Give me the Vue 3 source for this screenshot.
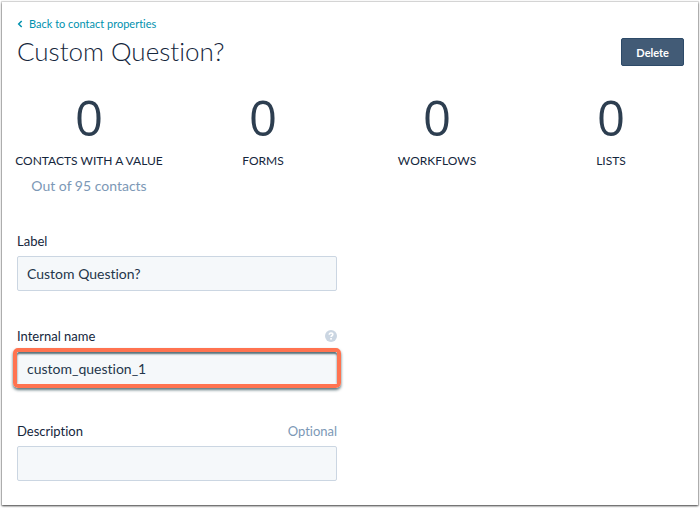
<script setup>
import { ref } from 'vue'

const label = ref('Custom Question?')
const internalName = ref('custom_question_1')
const description = ref('')

const stats = [
  { name: 'Contacts with a value', value: 0, note: 'Out of 95 contacts' },
  { name: 'Forms', value: 0 },
  { name: 'Workflows', value: 0 },
  { name: 'Lists', value: 0 },
]
</script>

<template>
  <div class="page">
    <main class="panel">
      <header class="header">
        <div>
          <a class="back" href="#properties">
            <svg class="chevron" viewBox="0 0 6 8" aria-hidden="true">
              <path d="M4.7 1 L1.7 4 L4.7 7" />
            </svg>
            Back to contact properties
          </a>
          <h1 class="title">Custom Question?</h1>
        </div>
        <button class="delete" type="button">Delete</button>
      </header>

      <section class="stats">
        <div v-for="stat in stats" :key="stat.name" class="stat">
          <div class="value">{{ stat.value }}</div>
          <div class="name">{{ stat.name }}</div>
          <div v-if="stat.note" class="note">{{ stat.note }}</div>
        </div>
      </section>

      <form class="form" @submit.prevent>
        <div class="field">
          <div class="caption">
            <label for="label">Label</label>
          </div>
          <input id="label" v-model="label" class="input" type="text" />
        </div>
        <div class="field">
          <div class="caption">
            <label for="internal-name">Internal name</label>
            <svg class="help" viewBox="0 0 12 12" aria-hidden="true">
              <circle cx="6" cy="6" r="6" />
              <path d="M4.3 4.7 C4.3 2.4 7.8 2.5 7.8 4.6 C7.8 5.8 6.1 5.7 6.1 7.1" />
              <rect x="5.2" y="8" width="1.7" height="1.6" />
            </svg>
          </div>
          <div class="highlight">
            <input id="internal-name" v-model="internalName" class="input" type="text" />
          </div>
        </div>
        <div class="field">
          <div class="caption">
            <label for="description">Description</label>
            <span class="optional">Optional</span>
          </div>
          <input id="description" v-model="description" class="input" type="text" />
        </div>
      </form>
    </main>
  </div>
</template>

<style>
body {
  background: #fff;
}
</style>

<style scoped>
.page {
  padding: 2px 2px 3px;
}

.panel {
  padding: 15px 0 24px;
  background: #fff;
  box-shadow: 0 1px 2px rgba(0, 0, 0, 0.7), 0 0 1px 1px rgba(0, 0, 0, 0.12);
  color: #24364a;
  font-family: Lato, "Liberation Sans", sans-serif;
  font-variant-ligatures: none;
}

.header {
  display: flex;
  align-items: flex-end;
  justify-content: space-between;
  padding: 0 14px 0 15px;
}

.back {
  display: flex;
  align-items: center;
  gap: 6px;
  color: #0091ae;
  font-size: 11px;
  line-height: 14px;
  text-decoration: none;
}

.chevron {
  width: 6px;
  height: 8px;
  fill: none;
  stroke: #0091ae;
  stroke-width: 1.5;
}

.title {
  margin: 3px 0 0;
  color: #14263c;
  font-size: 26px;
  font-weight: 300;
  line-height: 34px;
}

.delete {
  height: 28px;
  margin-bottom: 2px;
  padding: 0 14px;
  border: 1px solid #2d4a68;
  border-radius: 2px;
  background: #425b76;
  color: #fff;
  font-family: inherit;
  font-size: 11px;
  font-weight: 700;
}

.stats {
  display: grid;
  grid-template-columns: repeat(4, 1fr);
  margin-top: 19px;
  text-align: center;
}

.value {
  color: #2d3e50;
  font-family: "Open Sans", "Liberation Sans", sans-serif;
  font-size: 49px;
  line-height: 60px;
}

.name {
  margin-top: 5px;
  color: #14263c;
  font-size: 12px;
  line-height: 18px;
  text-transform: uppercase;
}

.note {
  margin-top: 6px;
  color: #7c98b6;
  font-size: 14px;
  line-height: 20px;
}

.form {
  display: grid;
  gap: 35px;
  width: 46%;
  margin-top: 35px;
  padding-left: 15px;
}

.caption {
  display: flex;
  align-items: center;
  justify-content: space-between;
  height: 20px;
  margin-bottom: 5px;
  color: #14263c;
  font-size: 13px;
}

.optional {
  color: #7c98b6;
}

.help {
  width: 12px;
  height: 12px;
  fill: #cbd6e2;
}

.help path {
  fill: none;
  stroke: #fff;
  stroke-width: 1.6;
}

.help rect {
  fill: #fff;
}

.input {
  display: block;
  box-sizing: border-box;
  width: 100%;
  height: 35px;
  padding: 0 9px;
  border: 1px solid #cbd6e2;
  border-radius: 2px;
  outline: none;
  background: #f5f8fa;
  color: #24364a;
  font-family: inherit;
  font-size: 14px;
  font-variant-ligatures: none;
}

.highlight {
  margin: -3px -4px -2px;
  border: 4px solid #ff7350;
  border-radius: 5px;
  box-shadow: 0 2px 3px rgba(0, 40, 50, 0.65);
}

.highlight .input {
  height: 32px;
  border: 0;
  padding: 0 10px;
  box-shadow: inset 0 2px 2px rgba(0, 40, 50, 0.65);
}
</style>
